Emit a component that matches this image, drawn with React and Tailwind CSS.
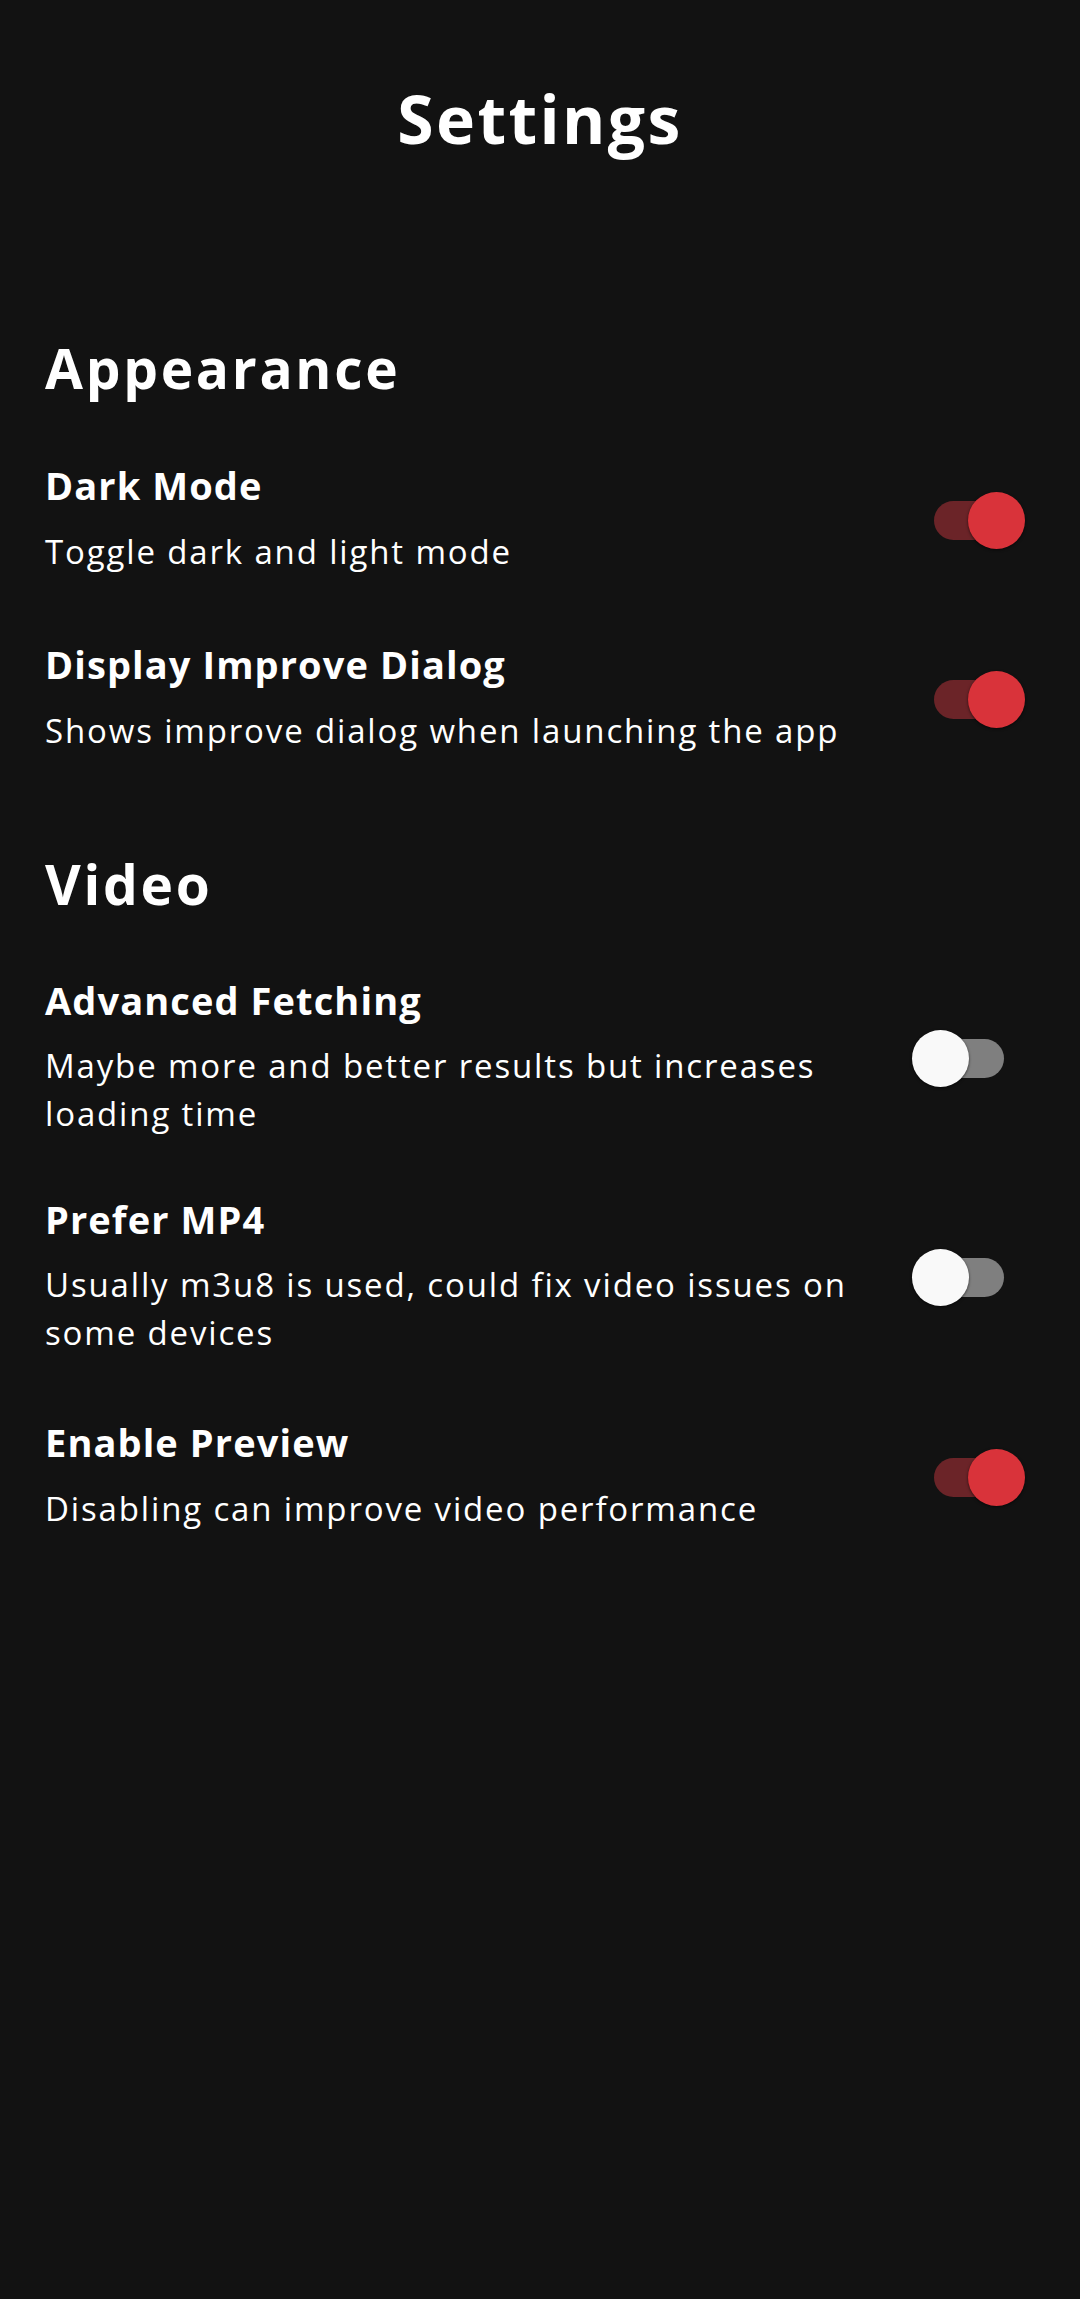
import React, { useState } from 'react';

const sections = [
  {
    title: 'Appearance',
    items: [
      { key: 'dark', title: 'Dark Mode', desc: 'Toggle dark and light mode', on: true, wraps: false, gap: 'mt-[64px]' },
      { key: 'dialog', title: 'Display Improve Dialog', desc: 'Shows improve dialog when launching the app', on: true, wraps: false, gap: 'mt-[62px]' },
    ],
  },
  {
    title: 'Video',
    items: [
      { key: 'fetch', title: 'Advanced Fetching', desc: 'Maybe more and better results but increases loading time', on: false, wraps: true, gap: 'mt-[63px]' },
      { key: 'mp4', title: 'Prefer MP4', desc: 'Usually m3u8 is used, could fix video issues on some devices', on: false, wraps: true, gap: 'mt-[55px]' },
      { key: 'preview', title: 'Enable Preview', desc: 'Disabling can improve video performance', on: true, wraps: false, gap: 'mt-[59px]' },
    ],
  },
];

const Switch = ({ on, onToggle }) => (
  <button
    type="button"
    onClick={onToggle}
    className="relative w-[113px] h-[57px] mt-[5px] shrink-0 flex items-center"
  >
    <span
      className={
        on
          ? 'block w-[90px] h-[39px] rounded-full bg-[#6b2428] ml-[22px]'
          : 'block w-[90px] h-[39px] rounded-full bg-[#7f7f7f] ml-[2px]'
      }
    />
    <span
      className={
        on
          ? 'absolute top-0 left-[56px] w-[57px] h-[57px] rounded-full bg-[#d9333a] shadow-[0_1px_3px_rgba(0,0,0,0.6)]'
          : 'absolute top-0 left-0 w-[57px] h-[57px] rounded-full bg-[#f9f9f9] shadow-[0_1px_3px_rgba(0,0,0,0.6)]'
      }
    />
  </button>
);

export default function App() {
  const [values, setValues] = useState(() => {
    const init = {};
    sections.forEach(s => s.items.forEach(i => { init[i.key] = i.on; }));
    return init;
  });

  const toggle = (key) => setValues({ ...values, [key]: !values[key] });

  return (
    <div
      className="min-h-[2299px] w-full bg-[#121212] text-white px-[45px] pt-[85px]"
      style={{ fontFamily: '"Open Sans", "Noto Sans", sans-serif' }}
    >
      <h1 className="text-center text-[66px] leading-[66px] font-bold tracking-[2.4px]">Settings</h1>

      {sections.map((section, si) => (
        <div key={section.title} className={si === 0 ? 'mt-[189px]' : 'mt-[101px]'}>
          <h2 className="text-[55px] leading-[55px] font-bold tracking-[2.7px]">{section.title}</h2>

          {section.items.map((item) => (
            <div key={item.key} className={`flex items-center justify-between ${item.gap}`}>
              <div className="w-[860px]">
                <div className="text-[38px] leading-[52px] font-bold tracking-[1.1px]">{item.title}</div>
                <div
                  className={
                    item.wraps
                      ? 'text-[33px] leading-[48px] tracking-[1.85px] mt-[16px]'
                      : 'text-[33px] leading-[48px] tracking-[1.85px] mt-[17px]'
                  }
                >
                  {item.desc}
                </div>
              </div>
              <div className="mr-[10px]">
                <Switch on={values[item.key]} onToggle={() => toggle(item.key)} />
              </div>
            </div>
          ))}
        </div>
      ))}
    </div>
  );
}
